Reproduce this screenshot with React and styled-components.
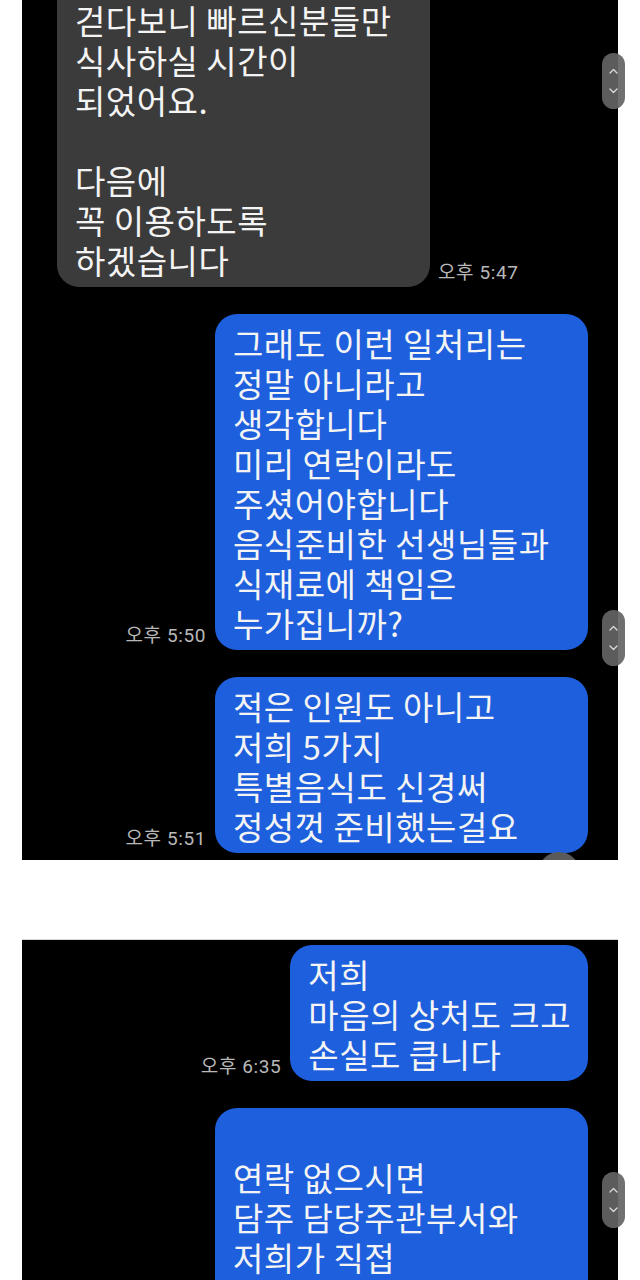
import React from "react";
import styled, { createGlobalStyle } from "styled-components";

const GlobalStyle = createGlobalStyle`
  body {
    margin: 0;
    background: #fff;
  }
`;

const Page = styled.div`
  display: flex;
  flex-direction: column;
  gap: 80px;
  padding: 0 22px;
  font-family: "Noto Sans CJK KR", "Noto Sans", sans-serif;
`;

const Panel = styled.div`
  position: relative;
  height: ${(p) => p.$height}px;
`;

const Screen = styled.div`
  position: relative;
  height: 100%;
  box-sizing: border-box;
  background: #000;
  overflow: hidden;
  display: flex;
  flex-direction: column;
  justify-content: ${(p) => (p.$fromBottom ? "flex-end" : "flex-start")};
  gap: 27px;
  padding: ${(p) => (p.$fromBottom ? "0 30px 7px 35px" : "5px 30px 0 35px")};
  box-shadow: ${(p) => (p.$fromBottom ? "none" : "0 -1px 0 #d6d6d6")};
`;

const Row = styled.div`
  display: flex;
  flex-shrink: 0;
  align-items: flex-end;
  justify-content: ${(p) => (p.$mine ? "flex-end" : "flex-start")};
  gap: ${(p) => (p.$mine ? 9 : 8)}px;
`;

const Bubble = styled.div`
  box-sizing: border-box;
  width: ${(p) => (p.$wide ? "373px" : "auto")};
  padding: ${(p) => p.$padTop ?? 9}px 17px ${(p) => p.$padBottom ?? 7}px 18px;
  border-radius: 22px;
  background: ${(p) => (p.$mine ? "#1d5fdc" : "#3b3b3b")};
  color: #f4f4f4;
  font-size: 33px;
  letter-spacing: 0.5px;
  line-height: 40px;
`;

const Line = styled.div`
  white-space: nowrap;
`;

const Time = styled.span`
  font-family: Roboto, "Noto Sans CJK KR", sans-serif;
  font-size: 19px;
  letter-spacing: 0.6px;
  color: #b8b8b8;
  white-space: nowrap;
  padding-bottom: 3px;
`;

const Handle = styled.div`
  position: absolute;
  right: -7px;
  top: ${(p) => p.$top}px;
  width: 23px;
  height: 56px;
  border-radius: 12px;
  background: rgba(100, 100, 100, 0.92);
  display: flex;
  flex-direction: column;
  align-items: center;
  justify-content: center;
  gap: 14px;
`;

const DownButton = styled.div`
  position: absolute;
  left: 516px;
  bottom: -34px;
  width: 42px;
  height: 42px;
  border-radius: 50%;
  background: #5a5a5a;
`;

const Chevron = ({ up }) => (
  <svg width="9" height="6" viewBox="0 0 9 6">
    <polyline
      points={up ? "1,5 4.5,1.5 8,5" : "1,1 4.5,4.5 8,1"}
      fill="none"
      stroke="#dcdcdc"
      strokeWidth="1.3"
      strokeLinecap="round"
      strokeLinejoin="round"
    />
  </svg>
);

const ScrollHandle = ({ top }) => (
  <Handle $top={top}>
    <Chevron up />
    <Chevron />
  </Handle>
);

const Message = ({ mine, wide, time, lines, padTop, padBottom }) => (
  <Row $mine={mine}>
    {mine && time && <Time>{time}</Time>}
    <Bubble $mine={mine} $wide={wide} $padTop={padTop} $padBottom={padBottom}>
      {lines.map((l, i) => (
        <Line key={i}>{l || "\u00a0"}</Line>
      ))}
    </Bubble>
    {!mine && time && <Time>{time}</Time>}
  </Row>
);

export default function App() {
  return (
    <>
      <GlobalStyle />
      <Page>
        <Panel $height={860}>
          <Screen $fromBottom>
            <Message
              wide
              time="오후 5:47"
              padTop={60}
              lines={[
                "걷다보니 빠르신분들만",
                "식사하실 시간이",
                "되었어요.",
                "",
                "다음에",
                "꼭 이용하도록",
                "하겠습니다",
              ]}
            />
            <Message
              mine
              wide
              time="오후 5:50"
              lines={[
                "그래도 이런 일처리는",
                "정말 아니라고",
                "생각합니다",
                "미리 연락이라도",
                "주셨어야합니다",
                "음식준비한 선생님들과",
                "식재료에 책임은",
                "누가집니까?",
              ]}
            />
            <Message
              mine
              wide
              time="오후 5:51"
              lines={[
                "적은 인원도 아니고",
                "저희 5가지",
                "특별음식도 신경써",
                "정성껏 준비했는걸요",
              ]}
            />
            <DownButton />
          </Screen>
          <ScrollHandle top={53} />
          <ScrollHandle top={610} />
        </Panel>

        <Panel $height={340}>
          <Screen>
            <Message
              mine
              time="오후 6:35"
              lines={["저희", "마음의 상처도 크고", "손실도 큽니다"]}
            />
            <Message
              mine
              wide
              padBottom={40}
              lines={["", "연락 없으시면", "담주 담당주관부서와", "저희가 직접", ""]}
            />
          </Screen>
          <ScrollHandle top={232} />
        </Panel>
      </Page>
    </>
  );
}
